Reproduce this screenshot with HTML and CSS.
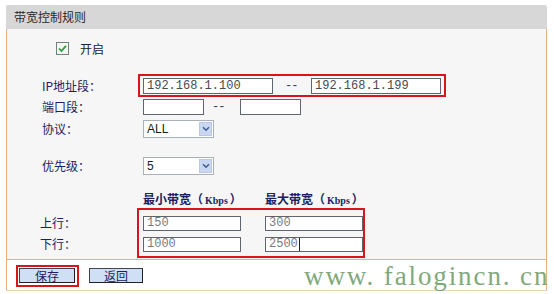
FILE: index.html
```html
<!DOCTYPE html>
<html>
<head>
<meta charset="utf-8">
<link rel="stylesheet" href="styles.css">
</head>
<body>
<div class="panel">
  <div class="panel-head">带宽控制规则</div>
  <div class="panel-body">
    <div class="row row-check">
      <span class="checkbox"><svg width="13" height="13" viewBox="0 0 13 13"><rect x="0.5" y="0.5" width="12" height="12" fill="#f4f6f4" stroke="#6e8478"/><path d="M3 6.5 L5.4 9 L10 3.8" fill="none" stroke="#2f9a3c" stroke-width="1.8"/></svg></span>
      <span class="check-text">开启</span>
    </div>
    <div class="row row-ip">
      <span class="label">IP地址段：</span>
      <div class="mark mark-ip">
        <span class="input w130">192.168.1.100</span>
        <span class="dash dash-ip">--</span>
        <span class="input w130">192.168.1.199</span>
      </div>
    </div>
    <div class="row row-port">
      <span class="label">端口段：</span>
      <span class="input w61"></span>
      <span class="dash dash-port">--</span>
      <span class="input w61"></span>
    </div>
    <div class="row row-proto">
      <span class="label">协议：</span>
      <span class="select"><span class="sel-text">ALL</span><span class="sel-arrow"><svg width="8" height="6" viewBox="0 0 8 6"><path d="M1 1.2 L4 4.2 L7 1.2" fill="none" stroke="#3d5f9a" stroke-width="1.6"/></svg></span></span>
    </div>
    <div class="row row-prio">
      <span class="label">优先级：</span>
      <span class="select"><span class="sel-text">5</span><span class="sel-arrow"><svg width="8" height="6" viewBox="0 0 8 6"><path d="M1 1.2 L4 4.2 L7 1.2" fill="none" stroke="#3d5f9a" stroke-width="1.6"/></svg></span></span>
    </div>
    <div class="row row-bwhead">
      <span class="label"></span>
      <span class="bw-title bw-min">最小带宽（<span class="kb">Kbps</span>）</span>
      <span class="bw-title">最大带宽（<span class="kb">Kbps</span>）</span>
    </div>
    <div class="bw">
      <div class="bw-labels">
        <span class="bw-label">上行：</span>
        <span class="bw-label">下行：</span>
      </div>
      <div class="mark mark-bw">
        <div class="bw-row">
          <span class="input w98 light">150</span>
          <span class="input w98 light">300</span>
        </div>
        <div class="bw-row">
          <span class="input w98 light">1000</span>
          <span class="input w98 light">2500<span class="caret"></span></span>
        </div>
      </div>
    </div>
  </div>
  <div class="panel-foot">
    <div class="mark mark-btn"><span class="btn btn-save">保存</span></div>
    <span class="btn btn-back">返回</span>
  </div>
</div>
<div class="watermark">www. falogincn. cn</div>
</body>
</html>
```
FILE: styles.css
```css
html, body {
  margin: 0;
  padding: 0;
  background: #ffffff;
}
body {
  width: 554px;
  height: 294px;
  overflow: hidden;
  position: relative;
  font-family: "Noto Sans CJK SC", "DejaVu Sans", sans-serif;
  font-size: 12px;
  color: #1d2160;
}
.panel {
  margin: 5px 0 0 6px;
  width: 541px;
}
.panel-head {
  height: 24px;
  line-height: 24px;
  background: #d7d7d7;
  color: #2a2a2a;
  padding-left: 8px;
  border-radius: 2px 2px 0 0;
}
.panel-body {
  background: #f6f6f6;
  border-left: 1px solid #e6b380;
  border-right: 1px solid #e6b380;
  border-bottom: 1px solid #e6b380;
  padding: 10px 0 0 35px;
  height: 231px;
  box-sizing: border-box;
}
.row {
  display: flex;
  align-items: center;
}
.label {
  width: 101px;
  flex: none;
  line-height: 14px;
}
.row-check {
  height: 18px;
  padding-left: 14px;
}
.checkbox {
  width: 13px;
  height: 13px;
  display: flex;
}
.check-text {
  margin-left: 11px;
  color: #202030;
}
.row-ip {
  margin-top: 17px;
  height: 23px;
}
.mark {
  border: 2px solid #d8141c;
  box-sizing: border-box;
}
.mark-ip {
  margin-left: -5px;
  height: 23px;
  width: 308px;
  padding-left: 3px;
  display: flex;
  align-items: center;
}
.input {
  display: inline-block;
  box-sizing: border-box;
  height: 16px;
  border: 1px solid #5e6470;
  background: #ffffff;
  font-family: "Liberation Mono", monospace;
  font-size: 12px;
  line-height: 14px;
  padding-left: 3px;
  color: #4a4a4a;
  flex: none;
}
.input.light {
  color: #7a7a7a;
  height: 15px;
  line-height: 13px;
}
.w130 { width: 130px; }
.w61 { width: 61px; }
.w98 { width: 98px; }
.dash {
  font-family: "Liberation Mono", monospace;
  color: #3a3a5a;
  flex: none;
  letter-spacing: -1px;
  box-sizing: border-box;
}
.dash-ip { width: 38px; padding-left: 12px; }
.dash-port { width: 36px; padding-left: 8px; }
.row-port {
  margin-top: 2px;
  height: 16px;
}
.row-proto {
  margin-top: 5px;
  height: 18px;
}
.row-prio {
  margin-top: 19px;
  height: 18px;
}
.select {
  display: flex;
  width: 71px;
  height: 18px;
  box-sizing: border-box;
  border: 1px solid #a9b0ba;
  background: #ffffff;
  align-items: center;
}
.sel-text {
  flex: 1;
  padding-left: 3px;
  font-family: "Liberation Sans", sans-serif;
  font-size: 12px;
  color: #1a1a1a;
}
.sel-arrow {
  width: 13px;
  height: 14px;
  margin-right: 1px;
  background: #c9d8f0;
  border: 1px solid #b8c8e4;
  box-sizing: border-box;
  display: flex;
  align-items: center;
  justify-content: center;
}
.row-bwhead {
  margin-top: 19px;
  height: 12px;
}
.bw-title {
  font-weight: bold;
  color: #1d2160;
  line-height: 12px;
}
.bw-min { width: 122px; flex: none; }
.kb {
  font-family: "Liberation Serif", serif;
  font-size: 10px;
  font-weight: bold;
  margin: 0 2px;
}
.bw {
  display: flex;
  margin-top: 2px;
}
.bw-labels {
  width: 95px;
  flex: none;
  display: flex;
  flex-direction: column;
  padding-top: 7px;
  gap: 6px;
}
.bw-label {
  height: 15px;
  line-height: 15px;
  margin-left: -2px;
}
.mark-bw {
  padding: 6px 0 4px 4px;
  width: 228px;
  display: flex;
  flex-direction: column;
  gap: 6px;
}
.bw-row {
  display: flex;
  gap: 24px;
}
.caret {
  display: inline-block;
  width: 1px;
  height: 13px;
  background: #222;
  vertical-align: top;
  margin-left: 1px;
}
.panel-foot {
  height: 31px;
  box-sizing: border-box;
  border-left: 1px solid #e6b380;
  border-right: 1px solid #e6b380;
  border-bottom: 1px solid #ead2b4;
  padding: 5px 0 0 9px;
  display: flex;
  align-items: flex-start;
}
.mark-btn {
  width: 63px;
  height: 22px;
  padding: 1px 0 0 1px;
}
.btn {
  display: flex;
  align-items: center;
  justify-content: center;
  box-sizing: border-box;
  height: 15px;
  background: #cfe0f4;
  border: 1px solid #3e4450;
  border-right-color: #202028;
  border-bottom-color: #202028;
  color: #1d2160;
  font-size: 12px;
}
.btn-save { width: 56px; }
.btn-back { width: 54px; margin: 3px 0 0 10px; }
.watermark {
  position: absolute;
  left: 304px;
  top: 259px;
  font-family: "Liberation Serif", serif;
  font-size: 27px;
  letter-spacing: 1.9px;
  color: #6a9a66;
  opacity: 0.85;
  white-space: nowrap;
  line-height: 34px;
}
```
